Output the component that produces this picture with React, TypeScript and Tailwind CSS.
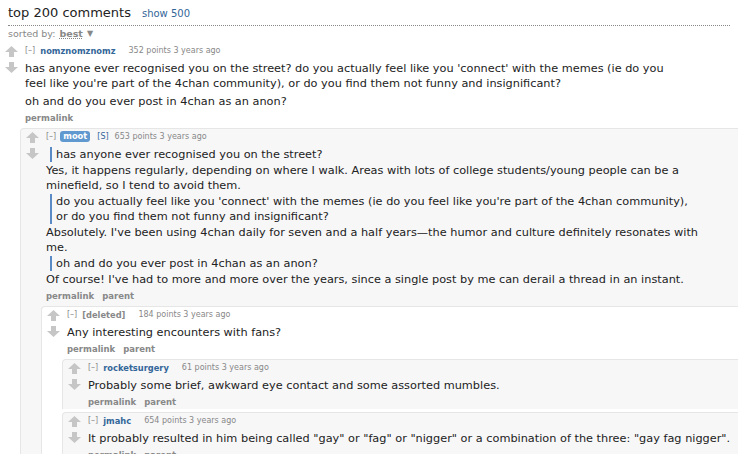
import React from "react";

const font = "font-['DejaVu_Sans',Verdana,sans-serif]";

function Arrows() {
  return (
    <div className="w-[25px] shrink-0 flex flex-col items-center pt-[2px] pr-[2px] gap-[5px]">
      <svg width="13" height="11" viewBox="0 0 13 11">
        <polygon points="6.5,0 13,6 9,6 9,11 4,11 4,6 0,6" fill="#c6c6c6" />
      </svg>
      <svg width="13" height="11" viewBox="0 0 13 11">
        <polygon points="6.5,11 13,5 9,5 9,0 4,0 4,5 0,5" fill="#c6c6c6" />
      </svg>
    </div>
  );
}

function Tagline({ author, points, badge }: { author: string; points: string; badge?: boolean }) {
  return (
    <p className="text-[8px] leading-[14px] text-[#888] flex items-center">
      <span>[–]</span>
      {badge ? (
        <>
          <span className="ml-[4px] bg-[#5f99cf] text-white text-[8.3px] font-bold rounded-[3px] px-[3px] leading-[11px]">{author}</span>
          <span className="ml-[7px] text-[#369]">[S]</span>
          <span className="ml-[6px]">{points} points 3 years ago</span>
        </>
      ) : (
        <>
          <span className={`ml-[5px] text-[8.3px] font-bold ${author === "[deleted]" ? "text-[#888]" : "text-[#369]"}`}>{author}</span>
          <span className="ml-[13px]">{points} points 3 years ago</span>
        </>
      )}
    </p>
  );
}

function Buttons({ parent = true }: { parent?: boolean }) {
  return (
    <p className="text-[8.5px] leading-[14px] font-bold text-[#888] flex gap-[8px] mt-[2px]">
      <span>permalink</span>
      {parent && <span>parent</span>}
    </p>
  );
}

function Quote({ children }: { children: React.ReactNode }) {
  return <div className="border-l-2 border-[#5a8bc4] pl-[4px] ml-[4px]">{children}</div>;
}

function Comment({
  author,
  points,
  badge,
  parent = true,
  boxed,
  gray,
  body,
  children,
}: {
  author: string;
  points: string;
  badge?: boolean;
  parent?: boolean;
  boxed?: boolean;
  gray?: boolean;
  body: React.ReactNode;
  children?: React.ReactNode;
}) {
  return (
    <div
      className={
        boxed
          ? `border-l border-t border-[#e6e6e6] rounded-tl-[4px] pt-[1px] mt-[3px] ${gray ? "bg-[#f7f7f8]" : "bg-white"}`
          : ""
      }
    >
      <div className="flex">
        <Arrows />
        <div className="flex-1 min-w-0">
          <Tagline author={author} points={points} badge={badge} />
          <div className="max-w-[690px] text-[11.3px] leading-[15px] text-[#222] mt-[3px] flex flex-col gap-[1px]">{body}</div>
          <Buttons parent={parent} />
        </div>
      </div>
      {children && <div className="pl-[20px]">{children}</div>}
    </div>
  );
}

export default function App() {
  return (
    <div className={`${font} w-[738px] h-[454px] overflow-hidden bg-white`}>
      <div className="mx-[8px] pt-[3px] border-b border-dotted border-[#888] flex items-baseline gap-[11px] pb-[2px]">
        <span className="text-[13px] text-[#222]">top 200 comments</span>
        <span className="text-[10px] text-[#369]">show 500</span>
      </div>
      <div className="mx-[8px] mt-[1px] text-[9.5px] text-[#888] flex items-center gap-[4px]">
        <span>sorted by:</span>
        <span className="font-bold underline decoration-dotted">best</span>
        <span className="text-[8px]">▼</span>
      </div>

      <div className="mt-[3px]">
        <Comment
          author="nomznomznomz"
          points="352"
          parent={false}
          body={
            <>
              <p>
                has anyone ever recognised you on the street? do you actually feel like you 'connect' with the memes (ie do you
                <br />
                feel like you're part of the 4chan community), or do you find them not funny and insignificant?
              </p>
              <p className="mt-[2px]">oh and do you ever post in 4chan as an anon?</p>
            </>
          }
        >
          <Comment
            boxed
            gray
            author="moot"
            badge
            points="653"
            body={
              <>
                <Quote>
                  <p>has anyone ever recognised you on the street?</p>
                </Quote>
                <p>
                  Yes, it happens regularly, depending on where I walk. Areas with lots of college students/young people can be a
                  <br />
                  minefield, so I tend to avoid them.
                </p>
                <Quote>
                  <p>
                    do you actually feel like you 'connect' with the memes (ie do you feel like you're part of the 4chan community),
                    <br />
                    or do you find them not funny and insignificant?
                  </p>
                </Quote>
                <p>
                  Absolutely. I've been using 4chan daily for seven and a half years—the humor and culture definitely resonates with
                  <br />
                  me.
                </p>
                <Quote>
                  <p>oh and do you ever post in 4chan as an anon?</p>
                </Quote>
                <p>Of course! I've had to more and more over the years, since a single post by me can derail a thread in an instant.</p>
              </>
            }
          >
            <Comment boxed author="[deleted]" points="184" body={<p>Any interesting encounters with fans?</p>}>
              <Comment
                boxed
                gray
                author="rocketsurgery"
                points="61"
                body={<p>Probably some brief, awkward eye contact and some assorted mumbles.</p>}
              />
              <Comment
                boxed
                gray
                author="jmahc"
                points="654"
                body={
                  <p>
                    It probably resulted in him being called "gay" or "fag" or "nigger" or a combination of the three: "gay fag nigger".
                  </p>
                }
              />
            </Comment>
          </Comment>
        </Comment>
      </div>
    </div>
  );
}
